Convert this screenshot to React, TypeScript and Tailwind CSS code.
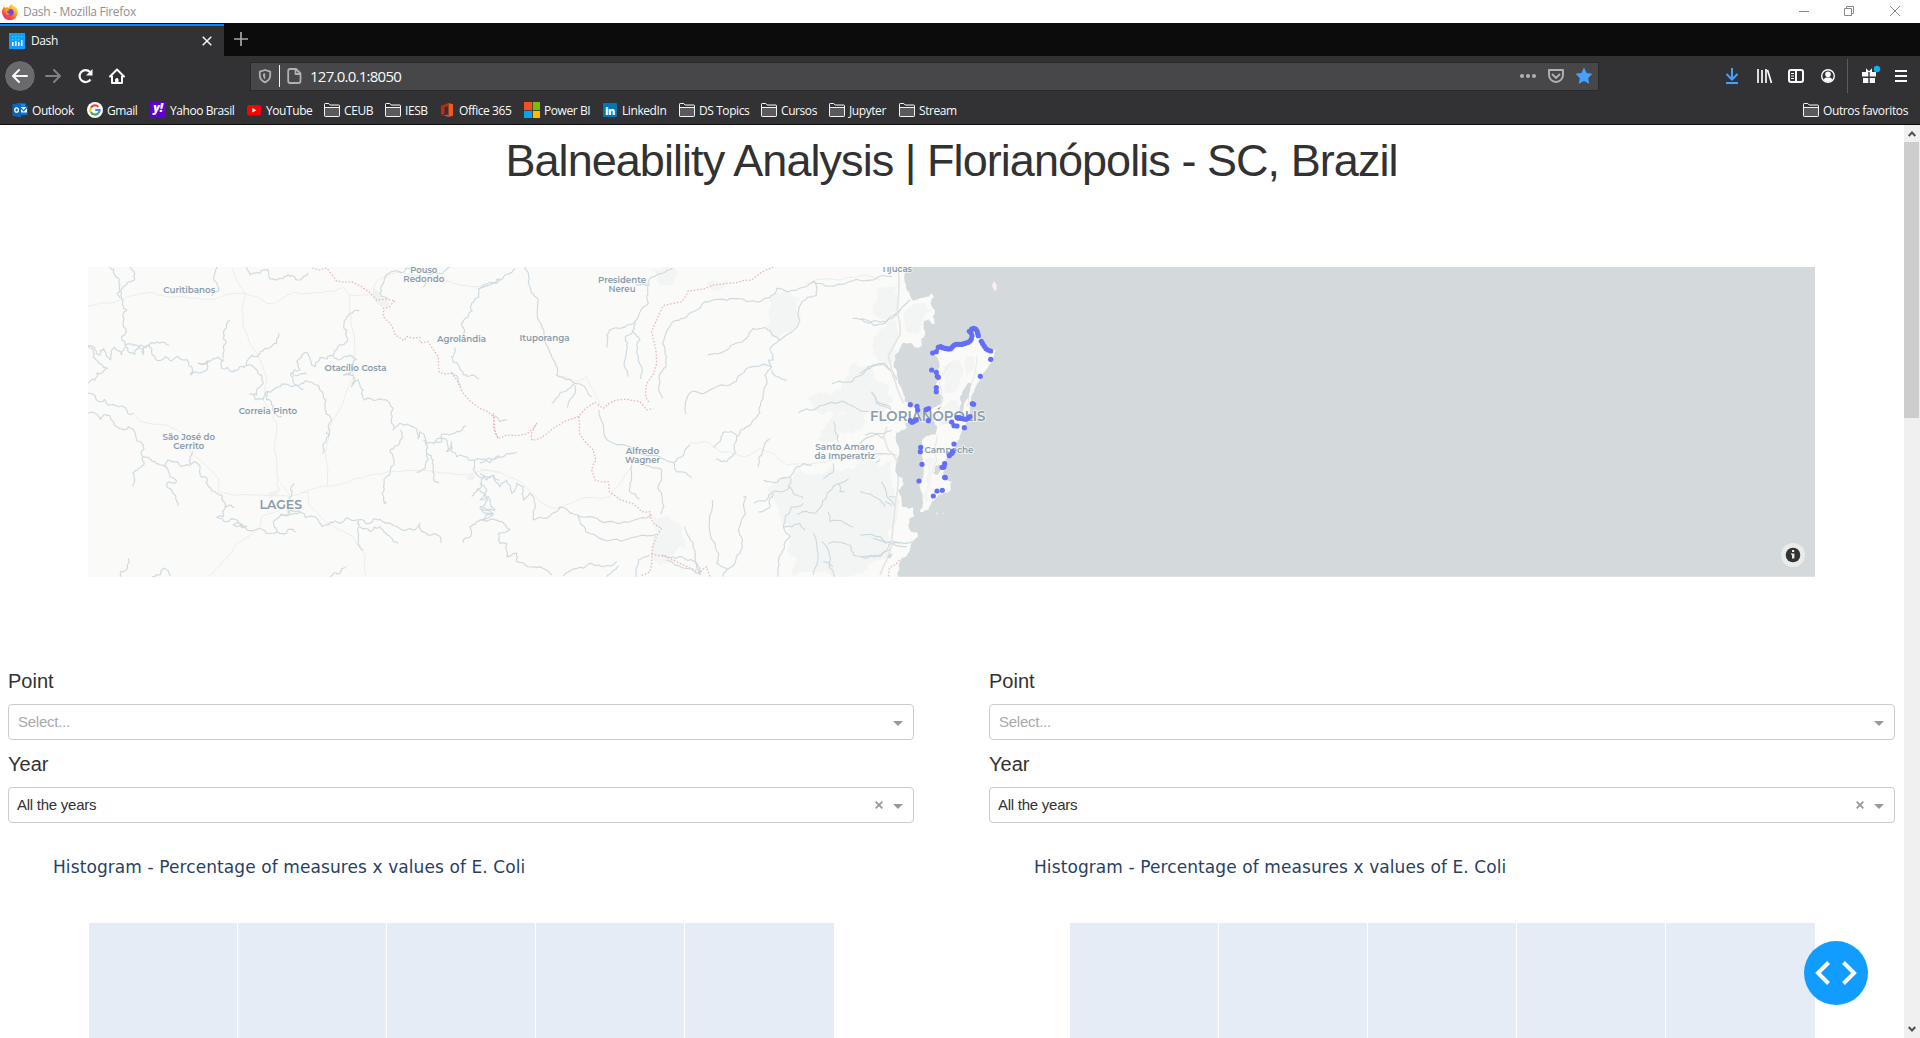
import React from "react";

/* ---------- geometry helpers ---------- */

function parse(s: string): number[][] {
  return s.trim().split(/\s+/).map((p) => p.split(",").map(Number));
}

// Adds small deterministic meanders between the given vertices.
function meander(s: string, amp: number, depth: number, close = false): string {
  let pts = parse(s);
  if (close) pts.push(pts[0]);
  let seed = Math.abs(pts[0][0] * 131 + pts[0][1] * 17 + pts.length * 7) + 11;
  const rnd = () => {
    seed = (seed * 16807) % 2147483647;
    return seed / 2147483647 - 0.5;
  };
  for (let k = 0; k < depth; k++) {
    const next: number[][] = [pts[0]];
    for (let i = 1; i < pts.length; i++) {
      const [ax, ay] = pts[i - 1];
      const [bx, by] = pts[i];
      const dx = bx - ax;
      const dy = by - ay;
      if (Math.hypot(dx, dy) > 7) {
        const o = rnd() * amp * 2;
        next.push([(ax + bx) / 2 - dy * o, (ay + by) / 2 + dx * o]);
      }
      next.push([bx, by]);
    }
    pts = next;
  }
  return "M" + pts.map((p) => p[0].toFixed(1) + " " + p[1].toFixed(1)).join("L") + (close ? "Z" : "");
}

/* ---------- map data ---------- */

const riversWest = [
  "88,21 105,45 118,80 125,115 140,150 130,200 125,235 138,258",
  "150,21 163,60 130,80 120,90 125,112",
  "24,258 45,268 60,285 72,265 90,300 105,262 125,285 140,262 165,283 178,258 190,285 205,255 215,280 230,300 255,290 275,303 295,290 325,305 332,345 370,335 385,305 355,310 400,295 430,300 425,325 455,335 480,320 500,315 525,325 545,345 540,380 530,405 510,402 550,418 560,395 600,380 660,375 700,370",
  "138,258 170,255 210,250 268,256",
  "450,180 430,220 437,250 430,295",
  "598,220 590,250 555,265 530,290 515,285 500,315",
  "24,370 45,360 50,340 82,325 50,300 40,275 24,258",
  "24,400 50,420 90,435 130,440 160,460",
  "24,460 60,478 70,465 100,485 110,500 130,510 145,500 165,520 190,555 190,590 225,605 255,620 262,600 290,605 330,615 345,605 360,640 385,680 425,705 435,740 430,770 410,772 470,780 500,800 460,795 550,810 590,815 580,790 610,765 660,755 700,770 725,800 780,790 830,780 880,778 930,790 1020,790 1030,815 1083,848",
  "190,590 185,620 158,640 160,680",
  "255,620 270,650 290,665 260,670 275,690 290,720 295,738",
  "590,815 620,820 625,808 648,816",
  "435,740 450,735 462,742",
  "410,21 402,50 412,70 410,95 395,108",
  "500,21 510,45 540,40 550,30 565,30 570,55 610,55 640,48 660,60 683,38",
  "838,152 820,155 810,160 800,210 785,255 760,285 720,292 705,320 685,280 665,285 650,305 660,330 632,340 640,365 670,388",
  "632,340 680,342",
  "760,285 775,300 800,290 830,298 790,345 820,345 815,380 835,360 850,390 855,420 910,420 940,445 935,490 940,510 960,490 1000,500 1015,535 1020,515 1040,550 1060,550 1090,535 1100,575 1115,545 1130,590 1180,600 1230,608 1260,590",
  "700,370 712,375 720,390 735,430 748,465 745,530 730,560 728,580",
  "745,530 738,515",
  "565,395 560,420 580,440 590,465 605,470",
  "960,510 955,555 930,575 920,650 918,730 910,725",
  "1030,540 1040,580 1010,637",
  "1040,580 1060,630 1077,670",
  "1158,497 1120,520 1085,522 1085,545 1060,550",
  "1110,21 1060,40 1000,30 960,38 920,42 910,70 900,100 925,115",
  "1036,60 1030,80",
  "1260,55 1230,75 1195,85 1175,130 1165,170 1145,190 1150,225",
  "1125,262 1115,290 1150,345 1198,357",
  "1110,340 1125,345 1140,380",
  "643,670 632,690 632,710 630,760",
  "600,765 640,762 660,755",
  "835,780 838,800 835,840 850,872",
  "840,800 900,800 920,825 955,850",
  "145,895 142,920 122,935 122,950",
  "215,950 240,945 250,925 270,948",
  "797,920 780,940 750,950",
  "1180,600 1180,630 1220,650 1260,660",
  "1210,650 1190,690 1220,710 1200,740 1240,760 1200,780 1170,800 1150,848",
  "1175,710 1195,690",
  "340,575 330,590 332,612",
];

const riversEast = [
  "105,25 75,45 50,70 0,85",
  "135,21 145,70 175,120 182,190 190,240 215,290 230,345 285,370 320,390 335,410",
  "285,370 240,400 215,430",
  "285,375 285,400 262,442",
  "40,465 60,485 80,480",
  "578,25 545,40 510,55 505,130 465,185 400,205 380,225 380,262",
  "465,185 458,215 435,230 440,270 432,315 445,350",
  "458,215 480,240 478,310 482,357",
  "510,75 480,75 425,72",
  "580,185 610,175 640,155 720,118 800,125 870,112 890,85 950,90 1000,65 1100,68 1180,60 1235,50",
  "580,185 562,210 560,290 538,345 548,415",
  "1000,65 1010,105 965,125 955,155 960,180 900,240 870,265 880,300 865,300 875,320 855,345 850,400 840,460 800,500 770,530 765,580 740,605 708,597",
  "683,285 740,270 800,235 820,205 870,212 900,240",
  "875,320 780,345 750,375 690,390 632,397 618,462",
  "875,330 885,347 920,360",
  "770,530 755,515 730,517 720,545 700,562",
  "357,450 375,530 450,560 540,590 580,608 630,555",
  "580,608 590,635 635,653",
  "455,615 455,660 450,695 478,718",
  "495,615 545,630 552,740 542,763",
  "0,610 50,595 110,577",
  "0,640 20,660 40,645 60,680 80,660 95,700 110,670 130,680 130,720 150,700 165,735 160,780 200,775 240,740 270,760 300,770 400,785 480,775 515,765",
  "295,765 300,790 345,825 450,835 530,822",
  "0,670 20,690 0,720 25,710 45,750 0,745 40,765 0,780 60,785 90,810 55,820 60,850 80,850 80,890 110,880 110,905 180,920 215,945",
  "250,948 330,910 355,915 410,905",
  "697,720 705,850 710,910 742,928 780,880 785,850 775,810 798,710 790,710",
  "742,928 728,950",
  "615,800 640,850 650,910 660,945",
  "545,885 590,895 605,890 620,900 645,905 660,945",
  "560,900 620,925 660,942",
  "508,885 475,900 470,950",
  "415,918 380,950",
  "870,535 850,570 835,620",
  "955,458 1000,450 1085,423 1165,455",
  "1055,372 1100,367 1130,350 1165,320 1215,310 1240,340",
  "1118,175 1165,190 1215,185 1260,150",
  "1175,395 1190,430 1230,445",
  "1155,525 1180,520 1215,535",
  "850,660 930,650 950,620 995,615",
  "930,650 925,680 970,715",
  "930,680 880,695 860,720 822,730",
  "880,700 870,740 835,757",
  "950,762 1000,760 1040,710 1080,670 1160,625 1200,598",
  "1060,485 1065,515 1075,545",
  "1060,610 1055,640 1030,655",
  "1078,670 1080,695 1115,690 1125,715",
  "1200,665 1215,700 1245,710",
  "1145,700 1190,705 1235,738",
  "1045,755 1050,785 1130,805 1180,835 1260,850",
  "1132,735 1140,780 1148,820",
  "1045,850 1110,855 1120,885 1190,890 1235,860",
  "970,730 935,740 910,800 930,830 905,880 895,950",
  "975,810 960,790 910,800",
  "1000,820 1000,945",
  "1025,845 1050,890 1065,950",
  "1030,905 1060,920",
  "1140,595 1200,580 1250,585",
];

const riversCoast = [
  "0,178 20,180 40,195 75,190 115,155 150,120",
  "0,340 30,325 60,310 90,330 110,360",
  "35,395 50,425 90,440 95,455",
  "0,550 30,530 70,520 95,510",
  "65,665 80,710 108,740",
  "0,695 60,720 75,740",
  "0,825 60,830 90,850 140,860",
  "90,850 60,890 0,890",
  "95,850 130,850 165,840",
];

const roadsWest = [
  "24,138 90,130 150,108 215,97 260,110 400,118 440,103 495,100 530,110 560,130 580,132 640,97 740,95 790,83 810,105 880,102 885,70 920,45 960,35 1060,50 1140,75 1220,80 1260,60",
  "455,21 470,60 495,100 485,150 490,200 515,260 540,300 560,360 550,420 590,490 592,650 595,690",
  "810,105 815,200 825,260 820,350 790,430 750,500 735,580 742,680",
  "160,460 180,485 260,495 310,520 330,575 380,620 415,655 415,695 520,705 630,710 680,692 770,675 870,645 1000,632 1160,645 1220,628 1260,640",
  "595,655 610,680 630,710 600,750 545,770 540,800 470,850 440,895 385,950",
  "660,700 685,695 690,740 760,800 820,830 855,885 858,950",
];
const roadsEast = [
  "230,345 290,365 320,350 350,410 360,440",
  "0,625 120,665 180,725 220,745 310,715 390,710 455,620",
  "630,550 680,545 720,575 790,590 840,565 880,580 920,615 995,612 1140,600 1220,580",
  "980,70 1080,60 1160,45 1200,60",
];
const roadsCoast = [
  "113,21 112,150 120,225 85,285 95,330 110,380 130,430",
  "80,500 70,530 85,570 110,600 115,660 100,790 95,850 60,945",
  "270,310 250,340 235,360 245,420 230,460 250,490 300,470",
  "350,290 345,340 325,400 320,440",
  "232,525 225,560 230,600 215,640",
];

const bordersWest = [
  "697,24 720,30 740,24 770,63 815,65 870,98 890,120 945,123 930,140 910,145 910,170 930,190 945,225 970,242 980,230 1020,232 1020,248 1045,245 1075,290 1078,338 1115,340 1140,380 1150,400 1200,445 1240,470 1245,510 1256,540",
];
const bordersEast = [
  "40,460 40,500 55,535 80,525 140,522 170,490 155,520 155,540 180,535 220,505 295,470 345,427 370,445 400,423 440,418 480,425 500,450 520,447",
  "880,21 815,60 770,68 700,75 650,90 625,92 605,125 550,137 530,180 515,215 528,270 530,310 500,370 497,410 510,430",
  "297,470 298,520 340,570 348,600 335,630 345,660 385,665 388,695 460,732 485,755 510,755 520,790 545,805 525,840 515,885 510,935 480,947",
  "515,882 560,890 600,910 660,938 680,920 690,950",
];

const parksEast = [
  "880,100 920,90 960,110 950,150 955,185 920,215 890,235 862,200 870,140",
  "515,25 580,25 588,50 560,75 530,62",
  "680,65 745,55 740,75 690,85",
  "520,770 570,765 595,790 605,830 620,870 570,890 605,915 540,915 515,885 520,840",
  "985,420 1050,405 1090,370 1120,310 1180,330 1225,380 1220,440 1160,455 1150,500 1110,520 1100,460 1010,455",
  "1040,490 1090,460 1110,510 1060,545 1010,540",
  "885,660 960,620 1050,625 1170,610 1240,600 1245,700 1255,760 1220,850 1230,890 1150,940 1060,950 940,950 930,830 895,760",
  "1175,260 1200,210 1245,180 1250,290 1220,310",
  "1200,150 1230,90 1255,80 1255,150 1220,175",
];
const parksCoast = [
  "50,100 100,80 108,150 80,180 40,160",
  "140,150 190,130 215,150 190,180 180,220 140,215",
  "250,320 300,300 310,340 290,390 255,400",
  "315,290 345,290 340,330 318,350",
  "245,440 290,420 300,450 270,480 240,500",
  "195,600 225,590 215,640 200,730 190,720 198,660",
  "0,600 60,620 95,640 90,720 60,760 70,820 0,820",
];
const urban = [
  "875,75 890,90 905,115 925,125 930,140 900,138 880,110",
  "565,700 600,682 590,705 570,715",
  "1160,655 1178,640 1185,655 1165,662",
];

const sea =
  "128,21 133,60 140,90 152,112 160,122 180,115 205,110 215,100 222,112 212,130 225,150 218,170 225,192 215,192 205,178 192,182 190,205 195,225 183,238 185,258 165,262 155,250 130,248 122,262 105,285 100,320 112,350 125,385 135,410 132,425 148,430 165,445 172,465 165,482 150,488 135,490 140,505 125,510 108,520 108,545 118,570 112,600 110,640 128,655 130,675 115,690 125,715 128,741 161,744 162,770 148,776 145,795 152,814 172,818 173,830 150,865 125,895 118,925 115,950";
const island =
  "215,280 237,262 270,268 290,255 325,245 335,225 328,215 340,205 355,212 355,230 370,260 390,273 407,270 400,290 385,320 365,350 350,375 338,400 335,430 330,460 322,480 312,505 300,525 285,550 278,575 265,590 255,610 250,640 256,655 275,665 272,690 250,700 235,705 215,725 205,750 185,757 180,755 190,725 182,690 180,665 190,645 186,615 184,580 185,545 200,528 225,525 232,500 222,485 222,460 205,455 205,445 228,440 245,430 250,415 232,400 228,380 240,350 228,335 240,320 235,300";
const lagoons = [
  "320,375 325,368 335,372 330,395 318,420 312,435 305,470 298,472 304,430 300,410 310,390",
  "225,620 238,612 242,630 232,645 220,640",
];
const islets = ["395,75 402,64 410,75 410,92 402,92", "226,758 234,758 230,766", "246,758 254,758 250,763", "330,770 334,768 333,773", "208,880 212,880 211,884"];

const points = parse(
  "218,279 229,275 235,262 242,260 248,263 254,265 260,266 266,267 272,266 277,261 282,256 288,253 294,253 300,253 306,253 312,251 318,249 324,247 330,243 334,237 336,227 333,218 328,214 335,207 341,205 347,207 351,213 353,220 355,227 364,244 368,251 373,259 378,266 384,270 392,273 392,298 361,349 215,330 229,337 232,349 235,352 229,383 229,395 337,431 341,433 151,434 171,439 173,450 198,449 206,446 205,482 151,482 156,487 162,484 169,480 292,473 298,473 304,475 311,477 318,478 324,474 330,470 275,486 282,497 291,498 313,503 282,552 182,562 181,575 278,574 276,580 268,587 186,613 254,611 252,620 246,622 250,622 254,652 256,653 177,663 231,693 247,691 220,708"
);

type Label = { t: string; x: number; y: number; w: number; s: number };
const labels: Label[] = [
  { t: "Curitibanos", x: 163.3, y: 292.7, w: 52, s: 8.8 },
  { t: "Pouso", x: 410.3, y: 273.2, w: 27, s: 8.8 },
  { t: "Redondo", x: 403.3, y: 282.2, w: 41, s: 8.8 },
  { t: "Agrolândia", x: 437, y: 341.7, w: 49, s: 8.8 },
  { t: "Otacílio Costa", x: 324.5, y: 370.7, w: 62, s: 8.8 },
  { t: "Correia Pinto", x: 238.7, y: 413.7, w: 58.5, s: 8.8 },
  { t: "São José do", x: 162.5, y: 440.2, w: 52.5, s: 8.8 },
  { t: "Cerrito", x: 173.3, y: 449.2, w: 31, s: 8.8 },
  { t: "LAGES", x: 259.5, y: 509.3, w: 42.5, s: 13.2 },
  { t: "Presidente", x: 598, y: 282.7, w: 48, s: 8.8 },
  { t: "Nereu", x: 608.5, y: 291.7, w: 27, s: 8.8 },
  { t: "Ituporanga", x: 519.5, y: 340.7, w: 50, s: 8.8 },
  { t: "Alfredo", x: 625.7, y: 454, w: 33.5, s: 8.8 },
  { t: "Wagner", x: 625, y: 463, w: 35, s: 8.8 },
  { t: "Santo Amaro", x: 815.3, y: 450.2, w: 59, s: 8.8 },
  { t: "da Imperatriz", x: 814.5, y: 459.2, w: 60.5, s: 8.8 },
  { t: "Tijucas", x: 881.5, y: 272, w: 30.5, s: 8.8 },
  { t: "FLORIANÓPOLIS", x: 870, y: 421, w: 115.5, s: 13.8 },
  { t: "Campeche", x: 924.5, y: 453, w: 49, s: 8.8 },
];

function Lines({ data, stroke, width, amp, depth, dash }: { data: string[]; stroke: string; width: number; amp: number; depth: number; dash?: string }) {
  return (
    <g fill="none" stroke={stroke} strokeWidth={width} strokeDasharray={dash} strokeLinejoin="round">
      {data.map((d, i) => (
        <path key={i} d={meander(d, amp, depth)} />
      ))}
    </g>
  );
}

const RIVER = "#cfdade";
const ROAD = "#ecedeb";
const BORDER = "#e5b6bd";
const PARK = "#f2f5f3";

function CoastMap() {
  return (
    <svg className="block h-[310px] w-[1727px]" viewBox="88 267 1727 310">
      <rect x="88" y="267" width="1727" height="310" fill="#fafaf8" />
      <g transform="translate(80 260) scale(0.33333)">
        {urban.map((d, i) => (
          <path key={i} d={meander(d, 0.12, 2, true)} fill="#f1f2f0" />
        ))}
        <Lines data={roadsWest} stroke={ROAD} width={3} amp={0.06} depth={3} />
        <Lines data={riversWest} stroke={RIVER} width={3.4} amp={0.26} depth={3} />
        <Lines data={bordersWest} stroke={BORDER} width={3.8} amp={0.1} depth={1} dash="4.5 5.5" />
      </g>
      <g transform="translate(480 260) scale(0.33333)">
        {parksEast.map((d, i) => (
          <path key={i} d={meander(d, 0.28, 4, true)} fill={PARK} />
        ))}
        <Lines data={roadsEast} stroke={ROAD} width={3} amp={0.08} depth={3} />
        <Lines data={riversEast} stroke={RIVER} width={3.4} amp={0.16} depth={3} />
        <Lines data={bordersEast} stroke={BORDER} width={3.8} amp={0.08} depth={1} dash="4.5 5.5" />
      </g>
      <g transform="translate(860 260) scale(0.33333)">
        {parksCoast.slice(0, 2).concat(parksCoast.slice(6)).map((d, i) => (
          <path key={i} d={meander(d, 0.22, 3, true)} fill={PARK} />
        ))}
        <Lines data={riversCoast} stroke={RIVER} width={3.6} amp={0.1} depth={3} />
        <Lines data={roadsCoast.slice(0, 2)} stroke="#e5e5e4" width={5} amp={0.04} depth={2} />
        <path d={meander(sea, 0.16, 3) + "L2900 950L2900 21Z"} fill="#d4dadc" />
        <path d={meander(island, 0.14, 3, true)} fill="#fafaf8" />
        {parksCoast.slice(2, 6).map((d, i) => (
          <path key={i} d={meander(d, 0.18, 3, true)} fill={PARK} />
        ))}
        <Lines data={roadsCoast.slice(2)} stroke="#e9eaea" width={3.5} amp={0.1} depth={2} />
        {lagoons.map((d, i) => (
          <path key={i} d={meander(d, 0.12, 2, true)} fill="#d4dadc" />
        ))}
        {islets.map((d, i) => (
          <path key={i} d={meander(d, 0.12, 2, true)} fill="#f6f1f0" stroke="#e6cfd2" strokeWidth="1" />
        ))}
        <path d={meander("118,900 105,915 88,925 85,950", 0.1, 1)} fill="none" stroke={BORDER} strokeWidth="3.8" strokeDasharray="4.5 5.5" />
        <path d={meander("84,885 98,880 92,895 84,895", 0.1, 1, true)} fill="#d4dadc" />
      </g>
      <g
        fill="#8a9dad"
        stroke="#fafaf8"
        strokeOpacity="0.8"
        strokeWidth="1.6"
        style={{ paintOrder: "stroke" }}
        className="font-['Montserrat','Inter',sans-serif] font-semibold"
      >
        {labels.map((l) => (
          <text key={l.t} x={l.x} y={l.y} fontSize={l.s} textLength={l.w} lengthAdjust="spacingAndGlyphs">
            {l.t}
          </text>
        ))}
      </g>
      <g transform="translate(860 260) scale(0.33333)" fill="#636efa">
        {points.map(([x, y], i) => (
          <circle key={i} cx={x} cy={y} r="7.8" />
        ))}
      </g>
      <circle cx="1793" cy="555" r="12" fill="#e9eceb" />
      <circle cx="1793" cy="555" r="7.3" fill="#333" />
      <path d="M1792 550h2.2v2h-2.2zM1791 553.6h3.4v5h-2.4v-3.8h-1z" fill="#e9eceb" />
    </svg>
  );
}

/* ---------- browser chrome icons ---------- */

const Folder = () => (
  <svg className="size-4" viewBox="0 0 16 16">
    <path d="M.5 14.5V2.2q0-.7.7-.7h3.6l1.4 1.5h8.6q.7 0 .7.7v10.1q0 .7-.7.7z" fill="#5a5a5c" />
    <path d="M1 5V2h4l1.3 1.5H15V5z" fill="#323234" />
    <path d="M.5 13.8V2.2q0-.7.7-.7h3.6l1.4 1.500h8.600q.7 0 .7.7v10.100q0 .7-.7.7H1.200q-.7 0-.7-.7zM.5 5.500h15" fill="none" stroke="#f4f4f5" strokeWidth="1" />
  </svg>
);
const Outlook = () => (
  <svg className="size-4" viewBox="0 0 16 16">
    <path d="M8 1.500h5.500v6H8z" fill="#1a8fe0" />
    <path d="M7 4h8.500v9H7z" fill="#1371c4" />
    <path d="M8.500 5h6.500v5.500H8.500z" fill="#e9f3fb" />
    <path d="M9 6l2.700 2.800L15 5" fill="none" stroke="#1371c4" strokeWidth="1.200" />
    <path d="M.5 2.200L9 .6v14.800L.5 13.800z" fill="#0a66b8" />
    <ellipse cx="4.600" cy="8" rx="1.800" ry="2.200" fill="none" stroke="#fff" strokeWidth="1.300" />
  </svg>
);
const Gmail = () => (
  <svg className="size-4" viewBox="0 0 16 16">
    <circle cx="8" cy="8" r="8" fill="#fff" />
    <g fill="none" strokeWidth="2.100">
      <path d="M11.300 4.700A4.700 4.700 0 0 0 3.900 5.700" stroke="#ea4335" />
      <path d="M3.900 5.700a4.700 4.700 0 0 0 0 4.600" stroke="#fbbc05" />
      <path d="M3.900 10.300a4.700 4.700 0 0 0 7.300 1" stroke="#34a853" />
      <path d="M11.200 11.300A4.700 4.700 0 0 0 12.700 8H8.200" stroke="#4285f4" />
    </g>
  </svg>
);
const Yahoo = () => (
  <span className="flex size-4 items-center justify-center bg-[#6001d2] font-['Open_Sans',sans-serif] text-[12px] leading-none font-extrabold text-white italic">
    <span className="-mt-1">y!</span>
  </span>
);
const YouTube = () => (
  <svg className="size-4" viewBox="0 0 16 16">
    <rect x="1" y="3" width="14" height="10.500" rx="2.500" fill="#f00" />
    <path d="M6.300 6v4.500l4-2.250z" fill="#fff" />
  </svg>
);
const Office = () => (
  <svg className="size-4" viewBox="0 0 16 16">
    <path d="M9.500 1L14 2.300v11.400L9.500 15z" fill="#f25a1d" />
    <path d="M2 4l7.500-3v3L5.500 5v7L3 13 2 12z" fill="#c8280f" />
    <path d="M4 13.200l5.500-.6V15z" fill="#d8405a" />
  </svg>
);
const Microsoft = () => (
  <span className="grid size-4 grid-cols-2 grid-rows-2 gap-px bg-[#4a4a30]">
    <span className="bg-[#f25022]" />
    <span className="bg-[#7fba00]" />
    <span className="bg-[#00a4ef]" />
    <span className="bg-[#ffb900]" />
  </span>
);
const LinkedIn = () => (
  <span className="mx-px flex size-3.5 items-center justify-center rounded-[1px] bg-[#0077b5] font-['Open_Sans',sans-serif] text-[11px] leading-none font-extrabold text-white">
    in
  </span>
);
const DashLogo = () => (
  <svg className="size-4" viewBox="0 0 16 16">
    <rect width="16" height="16" fill="#119dff" />
    <path d="M3 9h1.500v4H3zM6 8h1.500v5H6zM9 9h1.500v4H9zM12 7h1.500v6H12z" fill="#fff" />
    <path d="M3 3h1.500v1.300H3zM6 3h1.500v1.300H6zM9 3h1.500v1.300H9zM12 3h1.500v1.300H12zM3 6h1.500v1.300H3zM6 5.500h1.500v1.300H6zM9 6h1.500v1.300H9z" fill="#25d5e8" />
  </svg>
);
const Firefox = () => (
  <svg className="size-4" viewBox="0 0 16 16">
    <defs>
      <linearGradient id="ff" x1="0.8" y1="0.1" x2="0.25" y2="0.95">
        <stop offset="0" stopColor="#ffe14a" />
        <stop offset="0.4" stopColor="#ff9a28" />
        <stop offset="0.75" stopColor="#ff4a3a" />
        <stop offset="1" stopColor="#f0268a" />
      </linearGradient>
    </defs>
    <path d="M9.500 0c1 1.500 2.600 2 3.300 3 1.600.7 3 3 3 5.300A7.800 7.800 0 0 1 0 8.300C0 6 .8 3.600 2.300 2.300L3 4l2-1 1.500 1C7 2 8 1 9.500 0z" fill="url(#ff)" />
    <circle cx="8.200" cy="8.300" r="3.400" fill="#7b42d6" />
    <path d="M3 5.200c2-1.200 4-.2 4.800 1-1.500 0-1.800 1-2.800 1.300 0 2 2 2.600 3.600 2.300C6 12.500 2.500 9.500 3 5.200z" fill="#ffa02e" />
  </svg>
);

/* ---------- layout pieces ---------- */

const bookmarks: { icon: React.ReactNode; label: string; w: string }[] = [
  { icon: <Outlook />, label: "Outlook", w: "w-[75px]" },
  { icon: <Gmail />, label: "Gmail", w: "w-[63px]" },
  { icon: <Yahoo />, label: "Yahoo Brasil", w: "w-24" },
  { icon: <YouTube />, label: "YouTube", w: "w-[78px]" },
  { icon: <Folder />, label: "CEUB", w: "w-[61px]" },
  { icon: <Folder />, label: "IESB", w: "w-[54px]" },
  { icon: <Office />, label: "Office 365", w: "w-[85px]" },
  { icon: <Microsoft />, label: "Power BI", w: "w-[78px]" },
  { icon: <LinkedIn />, label: "LinkedIn", w: "w-[77px]" },
  { icon: <Folder />, label: "DS Topics", w: "w-[82px]" },
  { icon: <Folder />, label: "Cursos", w: "w-[68px]" },
  { icon: <Folder />, label: "Jupyter", w: "w-[70px]" },
  { icon: <Folder />, label: "Stream", w: "w-[70px]" },
];

function TitleBar() {
  return (
    <div className="flex h-[23px] items-center bg-white pr-5 pl-0.5 text-[12px] text-[#8f8f8f]">
      <Firefox />
      <span className="ml-[5px] tracking-[-0.3px]">Dash - Mozilla Firefox</span>
      <svg className="mt-[-2px] ml-auto h-3 w-[101px]" viewBox="0 0 101 12" fill="none" stroke="#8a8a8a">
        <path d="M0 6.500h10M45.500 3.500h7v7h-7zM47.500 3.500v-2h7v7h-2M91 1l10 10M101 1L91 11" />
      </svg>
    </div>
  );
}

function TabBar() {
  return (
    <div className="flex h-[33px] bg-[#0c0c0d]">
      <div className="mt-px flex h-8 w-56 items-center border-t-2 border-[#0a84ff] bg-[#323234] pr-3 pl-[9px] text-[12px] text-[#f9f9fa]">
        <DashLogo />
        <span className="ml-1.5 tracking-[-0.4px]">Dash</span>
        <svg className="ml-auto size-2.5" viewBox="0 0 10 10" stroke="#f4f4f5" strokeWidth="1.500">
          <path d="M.7.7l8.600 8.600M9.300.7L.7 9.300" />
        </svg>
      </div>
      <svg className="mt-[9px] ml-2.5 size-3.5" viewBox="0 0 14 14" stroke="#a8a8aa" strokeWidth="1.700">
        <path d="M7 0v14M0 7h14" />
      </svg>
    </div>
  );
}

function NavBar() {
  return (
    <div className="flex h-[42px] items-center bg-[#323234] pr-[13px] pl-1">
      <svg className="-mt-0.5 h-8 w-32 shrink-0" viewBox="4 60 128 32" fill="none" stroke="#f9f9fa" strokeWidth="2" strokeLinecap="round" strokeLinejoin="round">
        <circle cx="20" cy="76" r="15.500" fill="#6a6a6c" stroke="#29292b" strokeWidth="1" />
        <path d="M27 76H13M19 70l-6 6 6 6" />
        <path d="M46 76h14M54 70l6 6-6 6" stroke="#818183" />
        <path d="M90.500 79.500a6 6 0 1 1-.5-7.500" strokeLinecap="butt" strokeWidth="2.200" />
        <path d="M92.500 69v6.500H86z" fill="#f9f9fa" stroke="none" />
        <path d="M110 76.500l7-7 7 7M112 76.500v6.500h10v-6.500M117 83v-4" />
        <path d="M116 79h2v4h-2z" fill="#f9f9fa" strokeWidth="1" />
      </svg>
      <div className="-mt-0.5 ml-[118px] flex h-[29px] w-[1349px] shrink-0 items-center border border-[#29292b] bg-[#474749]">
        <svg className="h-[22px] w-[58px]" viewBox="251 65 58 22" fill="none" stroke="#b1b1b3" strokeWidth="1.800" strokeLinejoin="round">
          <path d="M265 70l5.200 1.600v3.400c0 3.500-2 6-5.200 7.300-3.200-1.300-5.200-3.800-5.200-7.300v-3.400z" />
          <path d="M265.200 73.200v6.300c-1.700-1-2.200-2.800-2.200-4.700v-1z" fill="#b1b1b3" stroke="none" />
          <path d="M279.500 65v22" stroke="#f4f4f5" strokeWidth="1" />
          <path d="M290 69h6l4.500 4.500V81q0 2-2 2h-8.500q-1.800 0-1.800-2V71q0-2 1.800-2zM295.500 69v5h5" />
        </svg>
        <span className="ml-px text-[15px] leading-none tracking-[-0.75px] text-[#f9f9fa]">127.0.0.1:8050</span>
        <svg className="mr-1.5 ml-auto h-5 w-[73px]" viewBox="1519 66 73 20">
          <g fill="#b1b1b3">
            <circle cx="1522" cy="76" r="2" />
            <circle cx="1528" cy="76" r="2" />
            <circle cx="1534" cy="76" r="2" />
          </g>
          <path d="M1549 70h14v5a7 7 0 0 1-14 0z" fill="none" stroke="#b1b1b3" strokeWidth="1.900" strokeLinejoin="round" />
          <path d="M1552.500 74.500l3.500 3.500 3.500-3.500" fill="none" stroke="#b1b1b3" strokeWidth="1.900" strokeLinecap="round" />
          <path d="M1584 67.500l2.600 5.400 5.900.8-4.300 4.200 1 5.900-5.200-2.900-5.200 2.900 1-5.900-4.300-4.200 5.900-.8z" fill="#45a1ff" />
        </svg>
      </div>
      <svg className="-mt-0.5 ml-auto h-[34px] w-[184px]" viewBox="1723 59 184 34" fill="none" stroke="#f9f9fa" strokeWidth="2">
        <path d="M1732 68v11M1726.500 74l5.500 5.500 5.500-5.500M1726 83h12" stroke="#45a1ff" />
        <path d="M1758 69v14M1762 70v13M1766 69v14M1767.500 70l4 13" strokeWidth="1.700" />
        <rect x="1789" y="70" width="14" height="12" rx="2" />
        <path d="M1796 70v12" />
        <path d="M1791 73.500h3M1791 76h3M1791 78.500h3" strokeWidth="1.100" />
        <circle cx="1828" cy="76" r="6.300" strokeWidth="1.400" />
        <circle cx="1828" cy="74.300" r="2.800" fill="#f9f9fa" stroke="none" />
        <path d="M1823.500 80q1-2.500 2.500-2.500h4q1.500 0 2.500 2.500-4.500 4-9 0z" fill="#f9f9fa" stroke="none" />
        <path d="M1847.500 59v34" stroke="#5b5b5d" strokeWidth="1" />
        <path d="M1862 72h6.300v4.500h-6.300zM1869.700 72h6.300v4.500h-6.300zM1863 78h5.300v5h-5.300zM1869.700 78h5.300v5h-5.300z" fill="#f9f9fa" stroke="none" />
        <path d="M1866 68.300l3 3 3-3v3.700h-6z" fill="#f9f9fa" stroke="none" />
        <circle cx="1877" cy="69" r="3.200" fill="#00b3f4" stroke="none" />
        <path d="M1895 71h12M1895 76h12M1895 81h12" />
      </svg>
    </div>
  );
}

function BookmarkBar() {
  return (
    <div className="flex h-[27px] items-start border-b border-[#0c0c0d] bg-[#323234] pt-1 pr-3 pl-3 text-[12px] leading-4 tracking-[-0.42px] whitespace-nowrap text-[#f9f9fa]">
      {bookmarks.map((b) => (
        <div key={b.label} className={"flex h-4 shrink-0 items-center gap-1 " + b.w}>
          {b.icon}
          <span className="pt-0.5">{b.label}</span>
        </div>
      ))}
      <div className="ml-auto flex h-4 items-center gap-1">
        <Folder />
        <span className="pt-0.5 tracking-[-0.37px]">Outros favoritos</span>
      </div>
    </div>
  );
}

function Select({ value, placeholder }: { value?: string; placeholder?: string }) {
  return (
    <div className="flex h-9 items-center rounded-[4px] border border-[#ccc] bg-white pr-[10px] pl-[9px] text-[15px] tracking-[-0.25px]">
      <span className={value ? "-ml-px text-[#323232]" : "text-[#aaa]"}>{value ?? placeholder}</span>
      {value && (
        <svg className="ml-auto size-2" viewBox="0 0 8 8" stroke="#999" strokeWidth="1.800">
          <path d="M.7.700l6.600 6.600M7.300.7L.7 7.300" />
        </svg>
      )}
      <span
        className={
          "mt-0.5 h-0 w-0 border-x-5 border-t-5 border-x-transparent border-t-[#999] " + (value ? "ml-[10px]" : "ml-auto")
        }
      />
    </div>
  );
}

function Panel() {
  return (
    <section className="w-[906px] font-['Liberation_Sans',Arial,sans-serif]">
      <h2 className="h-[35px] text-[20px] leading-[24px] text-[#323232]">Point</h2>
      <Select placeholder="Select..." />
      <h2 className="mt-[11px] h-9 pt-px text-[20px] leading-[24px] text-[#323232]">Year</h2>
      <Select value="All the years" />
      <h3 className="mt-[30px] ml-[45px] h-[70px] font-['Verdana','DejaVu_Sans',sans-serif] text-[17px] leading-[29px] tracking-[0.09px] whitespace-nowrap text-[#2a3f5f]">
        Histogram - Percentage of measures x values of E. Coli
      </h3>
      <div className="ml-[81px] grid h-[115px] w-[745px] grid-cols-5 divide-x divide-white bg-[#e5ecf6]">
        <span />
        <span />
        <span />
        <span />
        <span />
      </div>
    </section>
  );
}

export default function App() {
  return (
    <div className="flex h-[1038px] w-[1920px] flex-col overflow-hidden bg-white font-['Segoe_UI','Open_Sans','Noto_Sans',sans-serif]">
      <TitleBar />
      <TabBar />
      <NavBar />
      <BookmarkBar />
      <div className="flex min-h-0 flex-1">
        <main className="relative w-[1904px] overflow-hidden">
          <h1 className="h-[142px] pt-[9px] pr-px text-center font-['Liberation_Sans',Arial,sans-serif] text-[45px] leading-[54px] tracking-[-0.95px] text-[#323232]">
            Balneability Analysis | Florianópolis - SC, Brazil
          </h1>
          <div className="ml-[88px]">
            <CoastMap />
          </div>
          <div className="mt-[92px] flex justify-between pr-[9px] pl-2">
            <Panel />
            <Panel />
          </div>
          <button className="absolute right-9 bottom-[33px] flex size-16 items-center justify-center rounded-full bg-[#119dff]">
            <svg className="h-6 w-[42px]" viewBox="0 0 42 24" fill="none" stroke="#fff" strokeWidth="4">
              <path d="M13.500 1.500L3 12l10.500 10.500M28.500 1.500L39 12 28.500 22.500" />
            </svg>
          </button>
        </main>
        <aside className="flex w-4 flex-col items-center bg-[#f0f0f0] py-[5px]">
          <svg className="h-2 w-2" viewBox="0 0 8 8" fill="none" stroke="#505050" strokeWidth="2">
            <path d="M.7 6L4 2.500 7.300 6" />
          </svg>
          <div className="mt-1 mr-px h-[276px] w-[15px] bg-[#cdcdcd]" />
          <svg className="mt-auto h-2 w-2" viewBox="0 0 8 8" fill="none" stroke="#505050" strokeWidth="2">
            <path d="M.7 2L4 5.500 7.300 2" />
          </svg>
        </aside>
      </div>
    </div>
  );
}
